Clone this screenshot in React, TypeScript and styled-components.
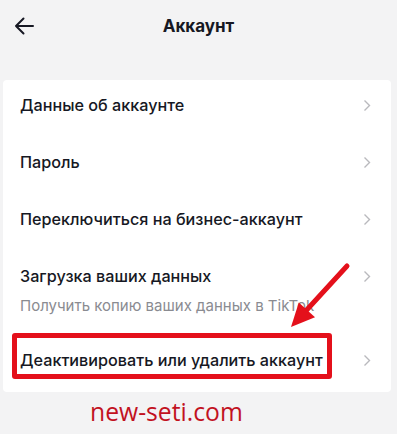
import React from "react";
import styled, { createGlobalStyle } from "styled-components";

const GlobalStyle = createGlobalStyle`
  html, body {
    margin: 0;
    padding: 0;
    background: #f3f3f4;
  }
  body {
    font-family: Inter, "Noto Sans", Roboto, sans-serif;
    color: #161823;
  }
`;

const Page = styled.div`
  position: relative;
  width: 397px;
  height: 434px;
  background: #f3f3f4;
  overflow: hidden;
`;

const Header = styled.header`
  display: grid;
  grid-template-columns: 48px 1fr 48px;
  align-items: center;
  height: 52px;
  margin-bottom: 28px;
`;

const BackButton = styled.button`
  display: flex;
  align-items: center;
  justify-content: center;
  width: 48px;
  height: 52px;
  padding: 0;
  border: none;
  background: transparent;
  color: #161823;
`;

const Title = styled.h1`
  margin: 0;
  text-align: center;
  font-size: 17px;
  font-weight: 700;
`;

const Card = styled.section`
  position: relative;
  margin: 0 6px 0 3px;
  background: #ffffff;
  border-radius: 4px;
`;

const Row = styled.div<{ $tall?: boolean }>`
  display: grid;
  grid-template-columns: 1fr 28px;
  align-items: start;
  padding: ${(p) => (p.$tall ? "15px 0 20px 17px" : "15px 0 0 17px")};
  height: ${(p) => (p.$tall ? "auto" : "42px")};
`;

const Texts = styled.div`
  display: flex;
  flex-direction: column;
  gap: 11px;
`;

const Label = styled.span`
  font-size: 16.2px;
  line-height: 20px;
  font-weight: 500;
  color: #161823;
`;

const Hint = styled.span`
  font-size: 15px;
  line-height: 18px;
  color: #8a8b91;
`;

const Chevron = styled.span`
  display: flex;
  height: 20px;
  align-items: center;
  color: #b9b9bd;
`;

const Highlight = styled.div`
  position: absolute;
  left: 9px;
  top: 253px;
  width: 320px;
  height: 46px;
  box-sizing: border-box;
  border: 5px solid #e4101b;
  border-radius: 3px;
  pointer-events: none;
`;

const Pointer = styled.svg`
  position: absolute;
  left: 0;
  top: 0;
  pointer-events: none;
`;

const Watermark = styled.div`
  padding-top: 5px;
  padding-left: 90px;
  font-family: "Open Sans", "Noto Sans", sans-serif;
  font-size: 24.7px;
  line-height: 30px;
  color: #c2121f;
`;

const items = [
  { label: "Данные об аккаунте" },
  { label: "Пароль" },
  { label: "Переключиться на бизнес-аккаунт" },
  { label: "Загрузка ваших данных", hint: "Получить копию ваших данных в TikTok" },
  { label: "Деактивировать или удалить аккаунт" },
];

const ChevronIcon = () => (
  <svg width="8" height="13" viewBox="0 0 8 13" fill="none">
    <path d="M1.5 1.5 L6.5 6.5 L1.5 11.5" stroke="currentColor" strokeWidth="1.4" />
  </svg>
);

const BackIcon = () => (
  <svg width="20" height="18" viewBox="0 0 20 18" fill="none">
    <path
      d="M19 9 H2 M9.5 1.5 L2 9 L9.5 16.5"
      stroke="currentColor"
      strokeWidth="2"
      strokeLinecap="round"
      strokeLinejoin="round"
    />
  </svg>
);

export default function App() {
  return (
    <Page>
      <GlobalStyle />
      <Header>
        <BackButton aria-label="Назад">
          <BackIcon />
        </BackButton>
        <Title>Аккаунт</Title>
        <div />
      </Header>
      <Card>
        {items.map((item) => (
          <Row key={item.label} $tall={!!item.hint}>
            <Texts>
              <Label>{item.label}</Label>
              {item.hint && <Hint>{item.hint}</Hint>}
            </Texts>
            <Chevron>
              <ChevronIcon />
            </Chevron>
          </Row>
        ))}
        <Highlight />
      </Card>
      <Watermark>new-seti.com</Watermark>
      <Pointer width="397" height="434" viewBox="0 0 397 434">
        <line x1="347" y1="266" x2="303" y2="314" stroke="#e4101b" strokeWidth="5" strokeLinecap="round" />
        <polygon points="291,327 298.8,302.4 315,317.2" fill="#e4101b" />
      </Pointer>
    </Page>
  );
}
